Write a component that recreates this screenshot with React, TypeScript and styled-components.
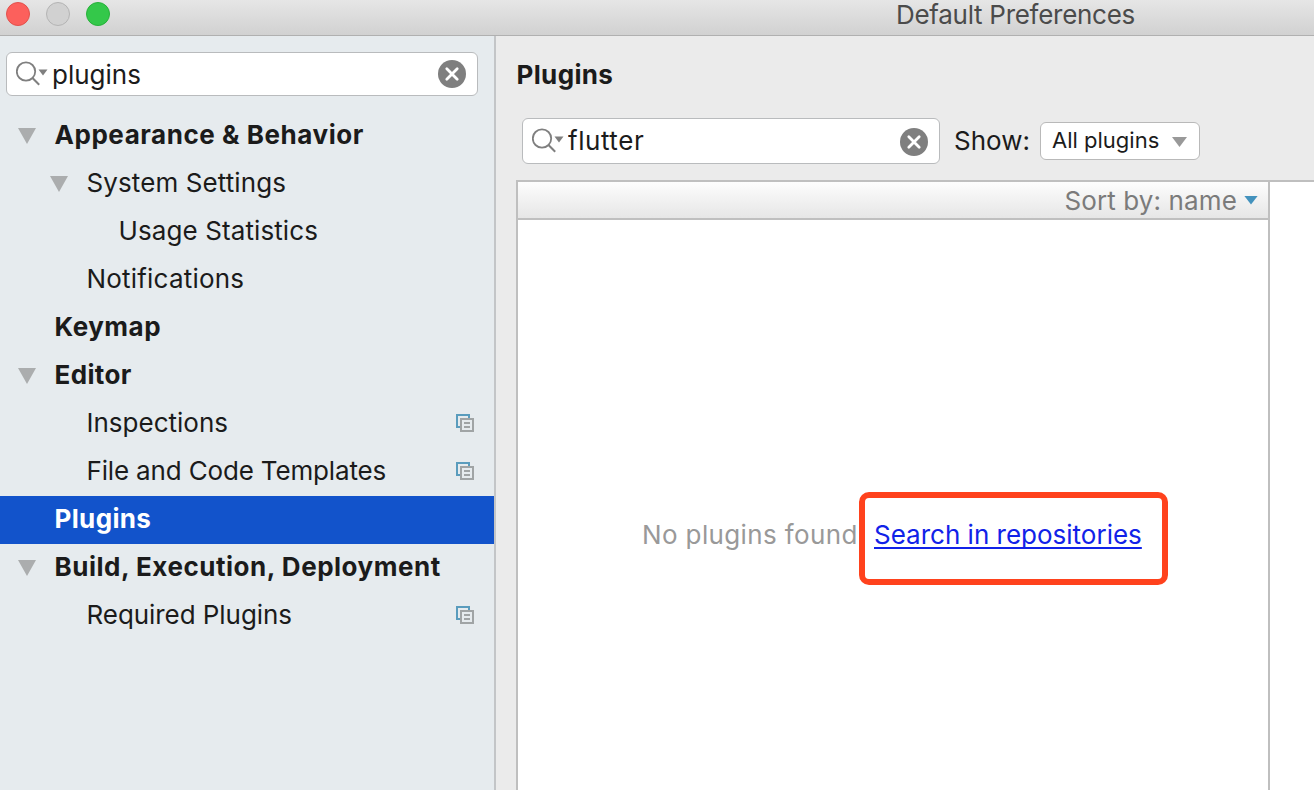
import { useState } from 'react';
import styled, { createGlobalStyle } from 'styled-components';

interface TreeItem {
    label: string;
    level: number;
    bold?: boolean;
    expanded?: boolean;
    shared?: boolean;
    spacing: number;
}

const treeItems: TreeItem[] = [
    { label: 'Appearance & Behavior', level: 0, bold: true, expanded: true, spacing: 0.55 },
    { label: 'System Settings', level: 1, expanded: true, spacing: 0.1 },
    { label: 'Usage Statistics', level: 2, spacing: 0.1 },
    { label: 'Notifications', level: 1, spacing: 0.2 },
    { label: 'Keymap', level: 0, bold: true, spacing: 0.5 },
    { label: 'Editor', level: 0, bold: true, expanded: true, spacing: 0.35 },
    { label: 'Inspections', level: 1, shared: true, spacing: 0 },
    { label: 'File and Code Templates', level: 1, shared: true, spacing: -0.16 },
    { label: 'Plugins', level: 0, bold: true, spacing: 0.35 },
    { label: 'Build, Execution, Deployment', level: 0, bold: true, expanded: true, spacing: 0.52 },
    { label: 'Required Plugins', level: 1, shared: true, spacing: -0.06 },
];

function SearchIcon() {
    return (
        <svg width="33" height="26" viewBox="0 0 33 26" fill="none">
            <circle cx="10" cy="10.5" r="9.2" stroke="#7f7f7f" strokeWidth="1.8" />
            <path d="M16.5 17L23.2 23.7" stroke="#7f7f7f" strokeWidth="2" />
            <path d="M22.5 8.5H31.5L27 14.5Z" fill="#7f7f7f" />
        </svg>
    );
}

function ClearIcon() {
    return (
        <svg width="28" height="28" viewBox="0 0 28 28">
            <circle cx="14" cy="14" r="14" fill="#7f7f7f" />
            <path d="M8.8 8.8L19.2 19.2M19.2 8.8L8.8 19.2" stroke="#fff" strokeWidth="2.8" strokeLinecap="round" />
        </svg>
    );
}

function CopyIcon() {
    return (
        <svg width="18" height="20" viewBox="0 0 18 20" fill="none">
            <path d="M4 13H1V1H13V4" stroke="#5a9cbd" strokeWidth="2" />
            <rect x="5" y="5" width="12" height="12" stroke="#a0a4a5" strokeWidth="2" />
            <path d="M8 9H14M8 13H14" stroke="#a0a4a5" strokeWidth="2" />
        </svg>
    );
}

function App() {
    const [selected, setSelected] = useState<string>('Plugins');
    const [query, setQuery] = useState<string>('plugins');
    const [pluginQuery, setPluginQuery] = useState<string>('flutter');

    return (
        <>
            <GlobalStyle />
            <Window>
                <TitleBar>
                    <TrafficLights>
                        <Light $color="#fc605c" $border="#e2514c" />
                        <Light $color="#d1d1d1" $border="#b4b4b4" />
                        <Light $color="#34c84a" $border="#27b13a" />
                    </TrafficLights>
                    <Title>Default Preferences</Title>
                </TitleBar>
                <Body>
                    <Sidebar>
                        <SearchField $height={44}>
                            <SearchIcon />
                            <SearchInput value={query} onChange={(e) => setQuery(e.target.value)} />
                            <ClearButton onClick={() => setQuery('')}>
                                <ClearIcon />
                            </ClearButton>
                        </SearchField>
                        <Tree>
                            {treeItems.map((item) => (
                                <TreeRow
                                    key={item.label}
                                    $level={item.level}
                                    $selected={item.label === selected}
                                    onClick={() => setSelected(item.label)}
                                >
                                    <ArrowSlot>{item.expanded && <TreeArrow />}</ArrowSlot>
                                    <TreeLabel $bold={item.bold} $spacing={item.spacing}>
                                        {item.label}
                                    </TreeLabel>
                                    {item.shared && <CopyIcon />}
                                </TreeRow>
                            ))}
                        </Tree>
                    </Sidebar>
                    <Content>
                        <Heading>Plugins</Heading>
                        <Filters>
                            <PluginSearch $height={46}>
                                <SearchIcon />
                                <PluginInput value={pluginQuery} onChange={(e) => setPluginQuery(e.target.value)} />
                                <PluginClear onClick={() => setPluginQuery('')}>
                                    <ClearIcon />
                                </PluginClear>
                            </PluginSearch>
                            <ShowLabel>Show:</ShowLabel>
                            <Select>
                                <SelectValue>All plugins</SelectValue>
                                <SelectArrow />
                            </Select>
                        </Filters>
                        <Panels>
                            <PluginList>
                                <SortBar>
                                    <SortLabel>Sort by: name</SortLabel>
                                    <SortArrow />
                                </SortBar>
                                <EmptyState>
                                    <EmptyText>No plugins found</EmptyText>
                                    <LinkWrap>
                                        <RepoLink href="#">Search in repositories</RepoLink>
                                        <Highlight />
                                    </LinkWrap>
                                </EmptyState>
                            </PluginList>
                            <Details />
                        </Panels>
                    </Content>
                </Body>
            </Window>
        </>
    );
}

const GlobalStyle = createGlobalStyle`
    * {
        box-sizing: border-box;
    }
    body {
        margin: 0;
        overflow: hidden;
        font-family: Inter, "Liberation Sans", sans-serif;
        font-size: 26px;
        color: #1b1b1b;
    }
    svg {
        display: block;
        flex-shrink: 0;
    }
`;

const Window = styled.div`
    display: flex;
    flex-direction: column;
    height: 790px;
    overflow: hidden;
    background-color: #ebebeb;
`;

const TitleBar = styled.div`
    display: flex;
    justify-content: space-between;
    height: 36px;
    padding-left: 6px;
    padding-right: 179px;
    background: linear-gradient(#e6e6e6, #d1d1d1);
    border-bottom: 1px solid #b0b0b0;
`;

const TrafficLights = styled.div`
    display: flex;
    gap: 16px;
    padding-top: 2px;
`;

const Light = styled.div<{ $color: string; $border: string }>`
    width: 24px;
    height: 24px;
    border-radius: 50%;
    background-color: ${({ $color }) => $color};
    border: 1px solid ${({ $border }) => $border};
`;

const Title = styled.div`
    line-height: 30px;
    letter-spacing: -0.28px;
    color: #4b4b4b;
    white-space: nowrap;
`;

const Body = styled.div`
    display: flex;
    flex: 1;
    min-height: 0;
`;

const Sidebar = styled.div`
    width: 496px;
    padding-top: 16px;
    background-color: #e6ebee;
    border-right: 2px solid #c3c5c7;
`;

const SearchField = styled.div<{ $height: number }>`
    display: flex;
    align-items: center;
    width: 472px;
    height: ${({ $height }) => $height}px;
    margin-left: 6px;
    padding-left: 9px;
    padding-right: 11px;
    background-color: white;
    border: 1px solid #b9bbbd;
    border-radius: 6px;
`;

const PluginSearch = styled(SearchField)`
    width: 418px;
    margin-left: 0;
`;

const SearchInput = styled.input`
    flex: 1;
    min-width: 0;
    height: 36px;
    padding: 0;
    padding-left: 3px;
    border: 0;
    outline: none;
    font: inherit;
    color: inherit;
    background: transparent;
`;

const PluginInput = styled(SearchInput)`
    padding-bottom: 2px;
    letter-spacing: 0.55px;
`;

const ClearButton = styled.button`
    padding: 0;
    border: 0;
    background: none;
    cursor: pointer;
`;

const PluginClear = styled(ClearButton)`
    padding-top: 2px;
`;

const Tree = styled.div`
    margin-top: 16px;
`;

const TreeRow = styled.div<{ $level: number; $selected: boolean }>`
    display: flex;
    align-items: center;
    height: 48px;
    padding-left: ${({ $level }) => 18 + $level * 32}px;
    padding-right: 20px;
    cursor: default;
    color: ${({ $selected }) => ($selected ? 'white' : 'inherit')};
    background-color: ${({ $selected }) => ($selected ? '#1253cb' : 'transparent')};
`;

const ArrowSlot = styled.div`
    width: 36px;
`;

const TreeArrow = styled.div`
    width: 18px;
    height: 16px;
    background-color: #abadae;
    clip-path: polygon(0 0, 100% 0, 50% 100%);
`;

const TreeLabel = styled.div<{ $bold?: boolean; $spacing: number }>`
    flex: 1;
    line-height: 46px;
    padding-left: 0.5px;
    padding-bottom: 2px;
    white-space: nowrap;
    font-weight: ${({ $bold }) => ($bold ? 700 : 400)};
    letter-spacing: ${({ $spacing }) => $spacing}px;
`;

const Content = styled.div`
    display: flex;
    flex: 1;
    min-width: 0;
    flex-direction: column;
    padding-left: 20px;
`;

const Heading = styled.div`
    height: 82px;
    line-height: 78px;
    padding-left: 0.5px;
    font-weight: 700;
    letter-spacing: 0.35px;
`;

const Filters = styled.div`
    display: flex;
    align-items: center;
    height: 62px;
    padding-left: 6px;
    padding-bottom: 16px;
`;

const ShowLabel = styled.div`
    width: 86px;
    margin-left: 14px;
    padding-bottom: 2px;
`;

const Select = styled.div`
    display: flex;
    align-items: center;
    justify-content: space-between;
    width: 160px;
    height: 38px;
    padding-left: 11px;
    padding-right: 12px;
    font-size: 22px;
    white-space: nowrap;
    background-color: white;
    border: 1px solid #b9b9b9;
    border-radius: 6px;
`;

const SelectValue = styled.span`
    padding-bottom: 2px;
`;

const SelectArrow = styled.div`
    width: 15px;
    height: 10px;
    margin-top: 2px;
    background-color: #999;
    clip-path: polygon(0 0, 100% 0, 50% 100%);
`;

const Panels = styled.div`
    display: flex;
    flex: 1;
    min-height: 0;
    border-top: 2px solid #bfbfbf;
`;

const PluginList = styled.div`
    display: flex;
    flex-direction: column;
    width: 754px;
    background-color: white;
    border-left: 2px solid #bfbfbf;
    border-right: 2px solid #bfbfbf;
`;

const SortBar = styled.div`
    display: flex;
    flex-shrink: 0;
    align-items: center;
    justify-content: flex-end;
    gap: 7px;
    height: 38px;
    padding-right: 10px;
    color: #7b7b7b;
    background: linear-gradient(#fdfdfd, #e6e6e6);
    border-bottom: 2px solid #bfbfbf;
`;

const SortLabel = styled.span`
    letter-spacing: 0.12px;
`;

const SortArrow = styled.div`
    width: 14px;
    height: 9px;
    background-color: #4392bd;
    clip-path: polygon(0 0, 100% 0, 50% 100%);
`;

const EmptyState = styled.div`
    display: flex;
    flex-shrink: 0;
    align-items: center;
    height: 628px;
    padding-left: 124px;
    white-space: nowrap;
`;

const EmptyText = styled.div`
    width: 232px;
    letter-spacing: 0.37px;
    color: #999;
`;

const LinkWrap = styled.div`
    position: relative;
`;

const RepoLink = styled.a`
    color: #1122e8;
    text-decoration: underline;
    text-decoration-thickness: 2px;
    text-underline-offset: 3px;
    text-decoration-skip-ink: none;
`;

/* red marker drawn around the link */
const Highlight = styled.div`
    position: absolute;
    top: -27px;
    left: -15px;
    width: 309px;
    height: 93px;
    border: 6px solid #ff421d;
    border-radius: 10px;
    pointer-events: none;
`;

const Details = styled.div`
    flex: 1;
    background-color: white;
`;

export default App;
